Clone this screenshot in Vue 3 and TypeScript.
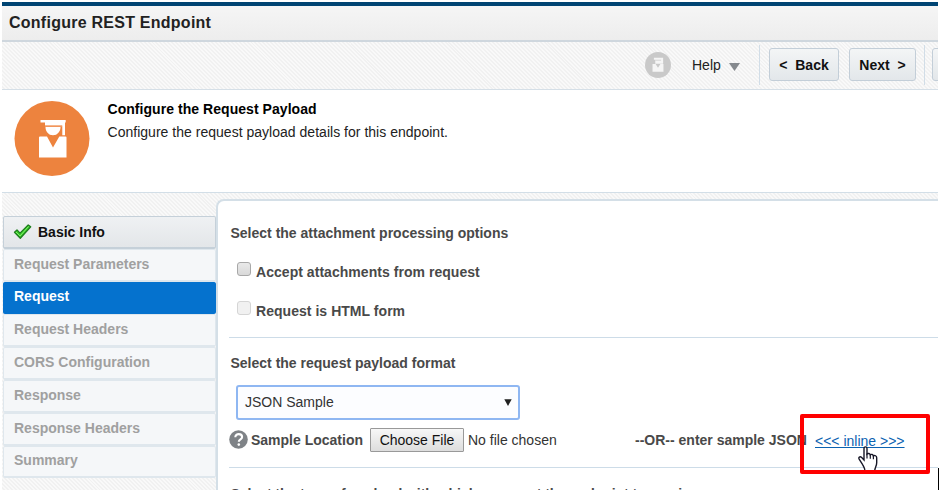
<script setup lang="ts">
interface Step {
  label: string
  state: 'done' | 'current' | 'pending'
}

const steps: Step[] = [
  { label: 'Basic Info', state: 'done' },
  { label: 'Request Parameters', state: 'pending' },
  { label: 'Request', state: 'current' },
  { label: 'Request Headers', state: 'pending' },
  { label: 'CORS Configuration', state: 'pending' },
  { label: 'Response', state: 'pending' },
  { label: 'Response Headers', state: 'pending' },
  { label: 'Summary', state: 'pending' },
]
</script>

<template>
  <div class="window">
    <header class="titlebar"><h1>Configure REST Endpoint</h1></header>
    <nav class="toolbar">
      <svg class="badge" viewBox="0 0 76 76">
        <circle cx="38" cy="38" r="38" fill="#c9c9c9" />
        <path fill="#f5f5f5" d="M26 17h27v17H43l-5 0H30V23h-4zM22 35h9l7 11 7-11h9v23H22z" />
        <path d="M30 24h17" stroke="#c9c9c9" stroke-width="2" />
      </svg>
      <span class="help">Help</span>
      <svg class="caret" viewBox="0 0 11 8"><path d="M0 0h11L5.500 8z" fill="#85898e" /></svg>
      <div class="group">
        <button class="btn back">&lt;&nbsp; Back</button>
        <button class="btn next">Next&nbsp; &gt;</button>
      </div>
      <div class="group last"><button class="btn cut"></button></div>
    </nav>
    <section class="intro">
      <svg class="logo" viewBox="0 0 76 76">
        <circle cx="38" cy="37.500" r="37.500" fill="#ed833e" />
        <path fill="#fff" d="M26.500 19h25.200v2.500h-.7v12.800h-2.700V24.500H31v-3h-4.500zM31.500 26h15c0 4.500-3 8.300-7.500 8.300S31.500 30.500 31.500 26zM26 35.500h7L39 46.500 45.300 35.500h6.200a1 1 0 0 1 1 1v20h-27.500v-20a1 1 0 0 1 1-1z" />
        <path d="M31 25.200h17" stroke="#f3a06a" stroke-width="1" />
      </svg>
      <div class="intro-copy">
        <h2>Configure the Request Payload</h2>
        <p>Configure the request payload details for this endpoint.</p>
      </div>
    </section>
    <div class="body">
      <ul class="steps">
        <li v-for="step in steps" :key="step.label" :class="step.state">
          <svg v-if="step.state === 'done'" class="check" viewBox="0 0 19 17">
            <path d="M1.500 9.300 4 6.900l3 3.200L15.200 2l2.500 1.800L7.300 15.300z" fill="#36ce28" stroke="#207d20" stroke-width="1.300" stroke-linejoin="round" />
            <path d="m3 9 4 4 8.500-9.500" fill="none" stroke="#8cf173" stroke-width=".9" />
          </svg>
          <span>{{ step.label }}</span>
        </li>
      </ul>
      <main class="panel">
        <h3 class="attach">Select the attachment processing options</h3>
        <label class="option"><i class="box"></i><span>Accept attachments from request</span></label>
        <label class="option second"><i class="box disabled"></i><span>Request is HTML form</span></label>
        <hr>
        <h3 class="format">Select the request payload format</h3>
        <div class="select">
          <span>JSON Sample</span>
          <svg viewBox="0 0 8 7"><path d="M.3.300h7.400L4 7z" fill="#202020" /></svg>
        </div>
        <div class="sample">
          <svg class="question" viewBox="0 0 19 19">
            <circle cx="9.500" cy="9.500" r="9.300" fill="#7f8387" />
            <path d="M6.300 7.300c0-4.300 6.800-4 6.800-.2 0 2.400-3.300 2.200-3.300 4.700" fill="none" stroke="#fff" stroke-width="2.100" />
            <circle cx="9.800" cy="14.600" r="1.300" fill="#fff" />
          </svg>
          <strong class="location">Sample Location</strong>
          <button class="file">Choose File</button>
          <span class="nofile">No file chosen</span>
          <strong class="or">--OR-- enter sample JSON</strong>
          <a class="inline">&lt;&lt;&lt; inline &gt;&gt;&gt;</a>
        </div>
        <hr class="sample-rule">
        <h3 class="type">Select the type of payload with which you want the endpoint to receive</h3>
      </main>
    </div>
    <svg class="pointer" viewBox="0 0 20 26">
      <path d="M7 25c0-3-1.500-4.500-3-7.500L1.300 13.500C0 11.300 2 10 3.700 11.500L6 14V2.500C6 .3 9 .3 9 2.500V8c1-1 3-.6 3.300.8 1-.8 2.800-.4 3.100 1 1.200-.8 3.300 0 3.300 2v5c0 3.500-2 5-2 8.200z" fill="#fff" stroke="#171727" stroke-width="1.400" />
      <path d="M9 7.500v5M12.300 8.800v4M15.400 9.800v3.500" stroke="#171727" stroke-width="1.200" />
    </svg>
    <div class="highlight"></div>
    <div class="edge"></div>
  </div>
</template>

<style>
body { background: #fff; overflow: hidden; }
</style>

<style scoped>
* { box-sizing: border-box; }
h1, h2, h3, p, ul { margin: 0; padding: 0; }
.window {
  position: relative; width: 941px; height: 490px; padding: 2px 3px 0 2px;
  overflow: hidden; background: #fff; color: #000;
  font: 14px/18px "Liberation Sans", Arial, sans-serif;
  display: flex; flex-direction: column;
}
.titlebar {
  height: 40px; flex: none; padding: 8px 7px; border-top: 4px solid #004473;
  border-bottom: 2px solid #cfd7de; background: linear-gradient(#f5f5f5, #ededed);
}
h1 { font-size: 16px; line-height: 18px; color: #222; letter-spacing: .25px; }
.toolbar, .body { background: repeating-linear-gradient(45deg, #f9f9f9 0 1.400px, #f1f1f1 1.400px 2.800px); }
.toolbar { height: 48px; flex: none; display: flex; align-items: center; border-bottom: 1px solid #d5dfe7; padding: 0 0 2px 643px; }
.badge { width: 26px; height: 26px; margin-top: 1px; }
.help { margin-left: 21px; width: 37px; color: #222; }
.caret { width: 11px; height: 8px; margin-top: 4px; }
.group { height: 40px; display: flex; align-items: center; gap: 10px; border-left: 1px solid #d1dde7; padding-left: 9px; margin-left: 19px; }
.group.last { margin-left: 8px; padding-left: 7px; overflow: hidden; flex: 1; }
.btn { flex: none; height: 33px; padding: 0; border: 1px solid #c3ced8; border-radius: 3px; background: linear-gradient(#f3f5f6, #e3e7ea); font: bold 14px/18px "Liberation Sans", Arial, sans-serif; color: #111; }
.back { width: 70px; }
.next { width: 67px; }
.cut { width: 60px; }
.intro { height: 103px; flex: none; display: flex; padding: 9px 12px; border-bottom: 1px solid #d2dee7; }
.logo { width: 76px; height: 76px; flex: none; margin-top: 2px; }
.intro-copy { padding-left: 17.500px; }
h2 { font-size: 14px; line-height: 20px; letter-spacing: .05px; }
.intro-copy p { line-height: 18px; margin-top: 4px; color: #222; letter-spacing: .02px; }
.body { flex: 1; min-height: 0; display: flex; }
.steps { width: 214px; flex: none; padding: 23px 0 0 1px; list-style: none; }
.steps li { height: 32.800px; padding: 0 10px; display: flex; align-items: center; border: 1px solid #dfe7ed; border-bottom-width: 2px; border-radius: 2px; background: #f5f7f9; color: #a0a0a0; font-weight: bold; }
.steps .done { padding-left: 9px; border-color: #c5d0d9; background: linear-gradient(#eff1f3, #e3e6e9); color: #111; }
.steps .current { border-color: #0572ce; background: #0572ce; color: #fff; }
.steps li span { position: relative; top: -1px; }
.steps .done span { top: 0; }
.check { width: 19px; height: 17px; margin-right: 6px; }
.panel { flex: 1; min-width: 0; margin-top: 6px; padding: 23px 0 0 12.500px; border: 2px solid #d4dfe7; border-right: 0; border-bottom: 0; border-radius: 8px 0 0; background: #fff; color: #494949; }
h3 { font-size: 14px; line-height: 18px; white-space: nowrap; }
.option { display: flex; align-items: center; height: 18px; margin: 21px 0 0 6.500px; font-weight: bold; letter-spacing: .04px; }
.option.second { margin-top: 21px; }
.box { width: 14px; height: 14px; margin: -6px 5px 0 0; border: 1px solid #a8a8a8; border-radius: 3px; background: linear-gradient(#e9e9e9, #d9d9d9); }
.disabled { border-color: #d5d5d5; background: #f1f1f1; }
hr { margin: 17px 0 0 -2px; border: 0; border-top: 1px solid #cddce8; }
.format { margin-top: 16px; }
.select { width: 284px; height: 35px; margin: 13px 0 0 5.500px; padding: 0 6px 1px 7px; border: 2px solid #8fb7f2; border-radius: 3px; background: #fcfdff; display: flex; align-items: center; justify-content: space-between; color: #333; }
.select svg { width: 8px; height: 7px; }
.sample { display: flex; align-items: center; height: 26px; margin-top: 7px; margin-left: -1.500px; white-space: nowrap; }
.question { width: 19px; height: 19px; margin-top: -1px; }
.location { margin-left: 3px; width: 119px; }
.file { width: 94px; height: 24px; padding: 0; border: 1px solid #999; border-radius: 1px; background: linear-gradient(#f7f7f7, #ddd); font: 14px/18px "Liberation Sans", Arial, sans-serif; color: #111; }
.nofile { margin-left: 4px; width: 167px; color: #333; }
.or { width: 180px; }
.inline { color: #0b62b1; text-decoration: underline; margin-top: 1px; }
.sample-rule { margin-top: 14px; }
.type { margin-top: 17px; letter-spacing: -.04px; }
.highlight { position: absolute; left: 800px; top: 414px; width: 130px; height: 60px; border: 4px solid #f00; border-radius: 2px; }
.pointer { position: absolute; left: 858px; top: 446px; width: 20px; height: 26px; }
.edge { position: absolute; left: 938px; top: 468px; width: 1px; height: 22px; background: #000; }
</style>
